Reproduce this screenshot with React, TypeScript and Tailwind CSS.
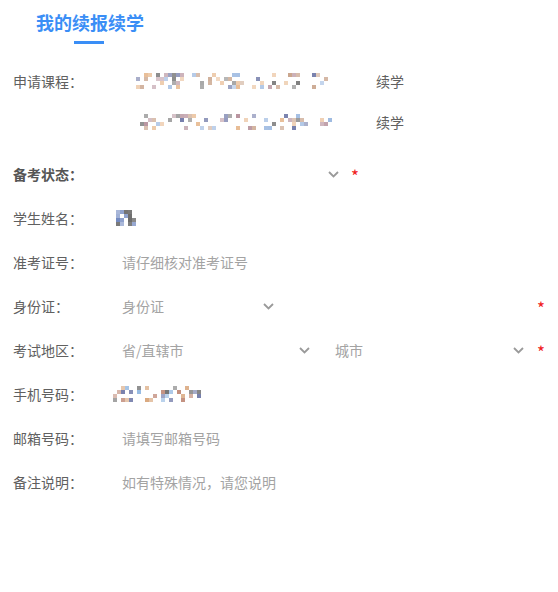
import * as React from 'react';

const PALETTE = ['#8a8a8a', '#9bb8e0', '#e8bc94', '#b8949f', '#777777', '#7079a8', '#c9a48c'];

// blurred (mosaic) personal data, drawn as random pixel blocks
function Mosaic({ width, height, seed, density = 0.45, colors = PALETTE }: { width: number; height: number; seed: number; density?: number; colors?: string[] }) {
    const cell = 4;
    const cols = Math.floor(width / cell);
    const rows = Math.floor(height / cell);
    let s = seed;
    const rand = () => {
        s = (s * 9301 + 49297) % 233280;
        return s / 233280;
    };
    const rects: React.ReactNode[] = [];
    for (let r = 0; r < rows; r++) {
        for (let c = 0; c < cols; c++) {
            if (rand() < density) {
                const color = colors[Math.floor(rand() * colors.length)];
                rects.push(<rect key={`${r}-${c}`} x={c * cell} y={r * cell} width={cell} height={cell} fill={color} opacity={0.55 + rand() * 0.45} />);
            }
        }
    }
    return (
        <svg width={width} height={height} viewBox={`0 0 ${width} ${height}`} className="block">
            {rects}
        </svg>
    );
}

function Chevron() {
    return (
        <svg width="11" height="7" viewBox="0 0 11 7" className="shrink-0">
            <polyline points="1,1 5.5,5.5 10,1" fill="none" stroke="#9a9a9a" strokeWidth="1.8" />
        </svg>
    );
}

function Star() {
    return <span className="mt-[2px] text-[17px] leading-none text-[#f02020]">*</span>;
}

function Select({ value, className }: { value?: string; className: string }) {
    return (
        <div className={`flex items-center justify-between pr-[4px] ${className}`}>
            <span className="text-[#a3a3a3]">{value}</span>
            <Chevron />
        </div>
    );
}

function Row({ label, bold, children }: { label: string; bold?: boolean; children?: React.ReactNode }) {
    return (
        <div className="flex h-[44px] items-center pl-[13px] pr-[13px]">
            <div className={`w-[109px] shrink-0 ${bold ? 'font-bold text-[#555]' : 'text-[#606060]'}`}>{label}：</div>
            {children}
        </div>
    );
}

export default function App() {
    return (
        <div className="min-h-screen w-full bg-white text-[14px] leading-[20px]" style={{ fontFamily: '"Noto Sans CJK SC", "Noto Sans", sans-serif' }}>
            <div className="pl-[36px] pt-[10px]">
                <h1 className="text-[18px] font-bold leading-[24px] text-[#3a8ef6]">我的续报续学</h1>
                <div className="ml-[38px] mt-[7px] h-[3px] w-[30px] bg-[#3a8ef6]" />
            </div>

            <div className="mt-[17px]">
                <div className="flex h-[40px] items-center pl-[13px]">
                    <div className="w-[123px] shrink-0 text-[#606060]">申请课程：</div>
                    <Mosaic width={200} height={16} seed={17} density={0.32} />
                    <span className="ml-[40px] text-[#606060]">续学</span>
                </div>
                <div className="flex h-[42px] items-center pl-[140px]">
                    <Mosaic width={196} height={16} seed={53} density={0.3} />
                    <span className="ml-[40px] text-[#606060]">续学</span>
                </div>

                <div className="mt-[9px]">
                    <Row label="备考状态" bold>
                        <Select className="w-[221px]" />
                        <span className="ml-[8px] flex"><Star /></span>
                    </Row>
                    <Row label="学生姓名">
                        <div className="-ml-[6px]">
                            <Mosaic width={20} height={16} seed={7} density={0.5} colors={['#6b6b6b', '#7088c0', '#555555']} />
                        </div>
                    </Row>
                    <Row label="准考证号">
                        <span className="text-[#a3a3a3]">请仔细核对准考证号</span>
                    </Row>
                    <Row label="身份证">
                        <Select value="身份证" className="w-[156px]" />
                        <div className="flex flex-1 justify-end"><Star /></div>
                    </Row>
                    <Row label="考试地区">
                        <Select value="省/直辖市" className="w-[192px]" />
                        <Select value="城市" className="ml-[21px] w-[193px]" />
                        <div className="flex flex-1 justify-end"><Star /></div>
                    </Row>
                    <Row label="手机号码">
                        <div className="-ml-[9px]">
                            <Mosaic width={88} height={16} seed={31} density={0.38} colors={['#6b6b6b', '#7079a8', '#d8a57a', '#8fb6e0', '#c08a78']} />
                        </div>
                    </Row>
                    <Row label="邮箱号码">
                        <span className="text-[#a3a3a3]">请填写邮箱号码</span>
                    </Row>
                    <Row label="备注说明">
                        <span className="text-[#a3a3a3]">如有特殊情况，请您说明</span>
                    </Row>
                </div>
            </div>
        </div>
    );
}
